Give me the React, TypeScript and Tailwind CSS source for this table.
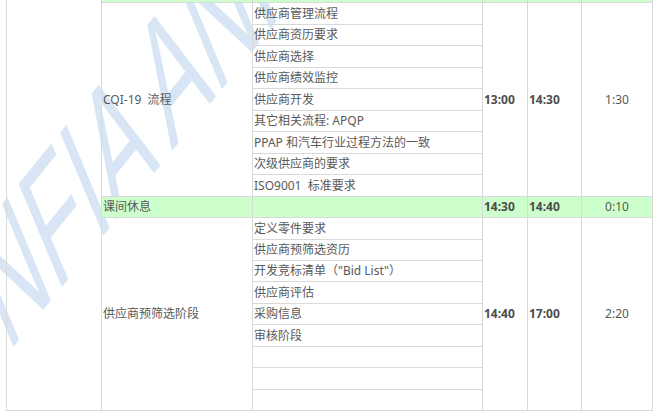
import type { ReactNode } from 'react';

type Block = {
    title: string;
    items: string[];
    start: string;
    end: string;
    total: string;
};

const blocks: Block[] = [
    {
        title: 'CQI-19  流程',
        items: [
            '供应商管理流程',
            '供应商资历要求',
            '供应商选择',
            '供应商绩效监控',
            '供应商开发',
            '其它相关流程: APQP',
            'PPAP 和汽车行业过程方法的一致',
            '次级供应商的要求',
            'ISO9001  标准要求',
        ],
        start: '13:00',
        end: '14:30',
        total: '1:30',
    },
    {
        title: '供应商预筛选阶段',
        items: ['定义零件要求', '供应商预筛选资历', '开发竞标清单（"Bid List"）', '供应商评估', '采购信息', '审核阶段', '', '', ''],
        start: '14:40',
        end: '17:00',
        total: '2:20',
    },
];

function Cell({ className = '', children }: { className?: string; children?: ReactNode }) {
    return <div className={`border-r border-b border-[#d9d9d9] flex items-center whitespace-pre ${className}`}>{children}</div>;
}

function Section({ block }: { block: Block }) {
    return (
        <>
            <Cell className="row-span-9 pl-px">{block.title}</Cell>
            <Cell className="pl-px">{block.items[0]}</Cell>
            <Cell className="row-span-9 pl-px font-bold text-[#4d4d4d]">{block.start}</Cell>
            <Cell className="row-span-9 pl-px font-bold text-[#4d4d4d]">{block.end}</Cell>
            <Cell className="row-span-9 justify-center">{block.total}</Cell>
            {block.items.slice(1).map((item, i) => (
                <Cell key={i} className="pl-px">
                    {item}
                </Cell>
            ))}
        </>
    );
}

export default function App() {
    return (
        <div className="relative w-[660px] h-[420px] overflow-hidden bg-white text-[12px] leading-none text-[#595959] font-['Noto_Sans','Noto_Sans_CJK_SC',sans-serif]">
            {/* watermark, sits under the table; green cells cover it */}
            <div className="pointer-events-none absolute z-0 left-[18px] top-[237px] origin-bottom-left [transform:matrix(0.478,-0.591,0.449,1.07,0,0)] whitespace-pre text-[140px] leading-none text-[#d8e5f5] font-['Liberation_Sans',sans-serif]">
                NFIA ANHUI
            </div>
            <div className="relative z-10 ml-[6px] grid grid-cols-[96px_151px_230px_45px_54px_71px] grid-rows-[3px_22px_21px_22px_21px_22px_21px_22px_21px_22px_21px_22px_21px_21px_22px_21px_22px_21px_22px_21px]">
                <Cell className="row-span-20 border-l" />
                <Cell className="bg-[#ccffcc]" />
                <Cell className="bg-[#ccffcc]" />
                <Cell className="bg-[#ccffcc]" />
                <Cell className="bg-[#ccffcc]" />
                <Cell className="bg-[#ccffcc]" />
                <Section block={blocks[0]} />
                <Cell className="bg-[#ccffcc] pl-px">课间休息</Cell>
                <Cell className="bg-[#ccffcc]" />
                <Cell className="bg-[#ccffcc] pl-px font-bold text-[#4d4d4d]">14:30</Cell>
                <Cell className="bg-[#ccffcc] pl-px font-bold text-[#4d4d4d]">14:40</Cell>
                <Cell className="bg-[#ccffcc] justify-center">0:10</Cell>
                <Section block={blocks[1]} />
            </div>
        </div>
    );
}
